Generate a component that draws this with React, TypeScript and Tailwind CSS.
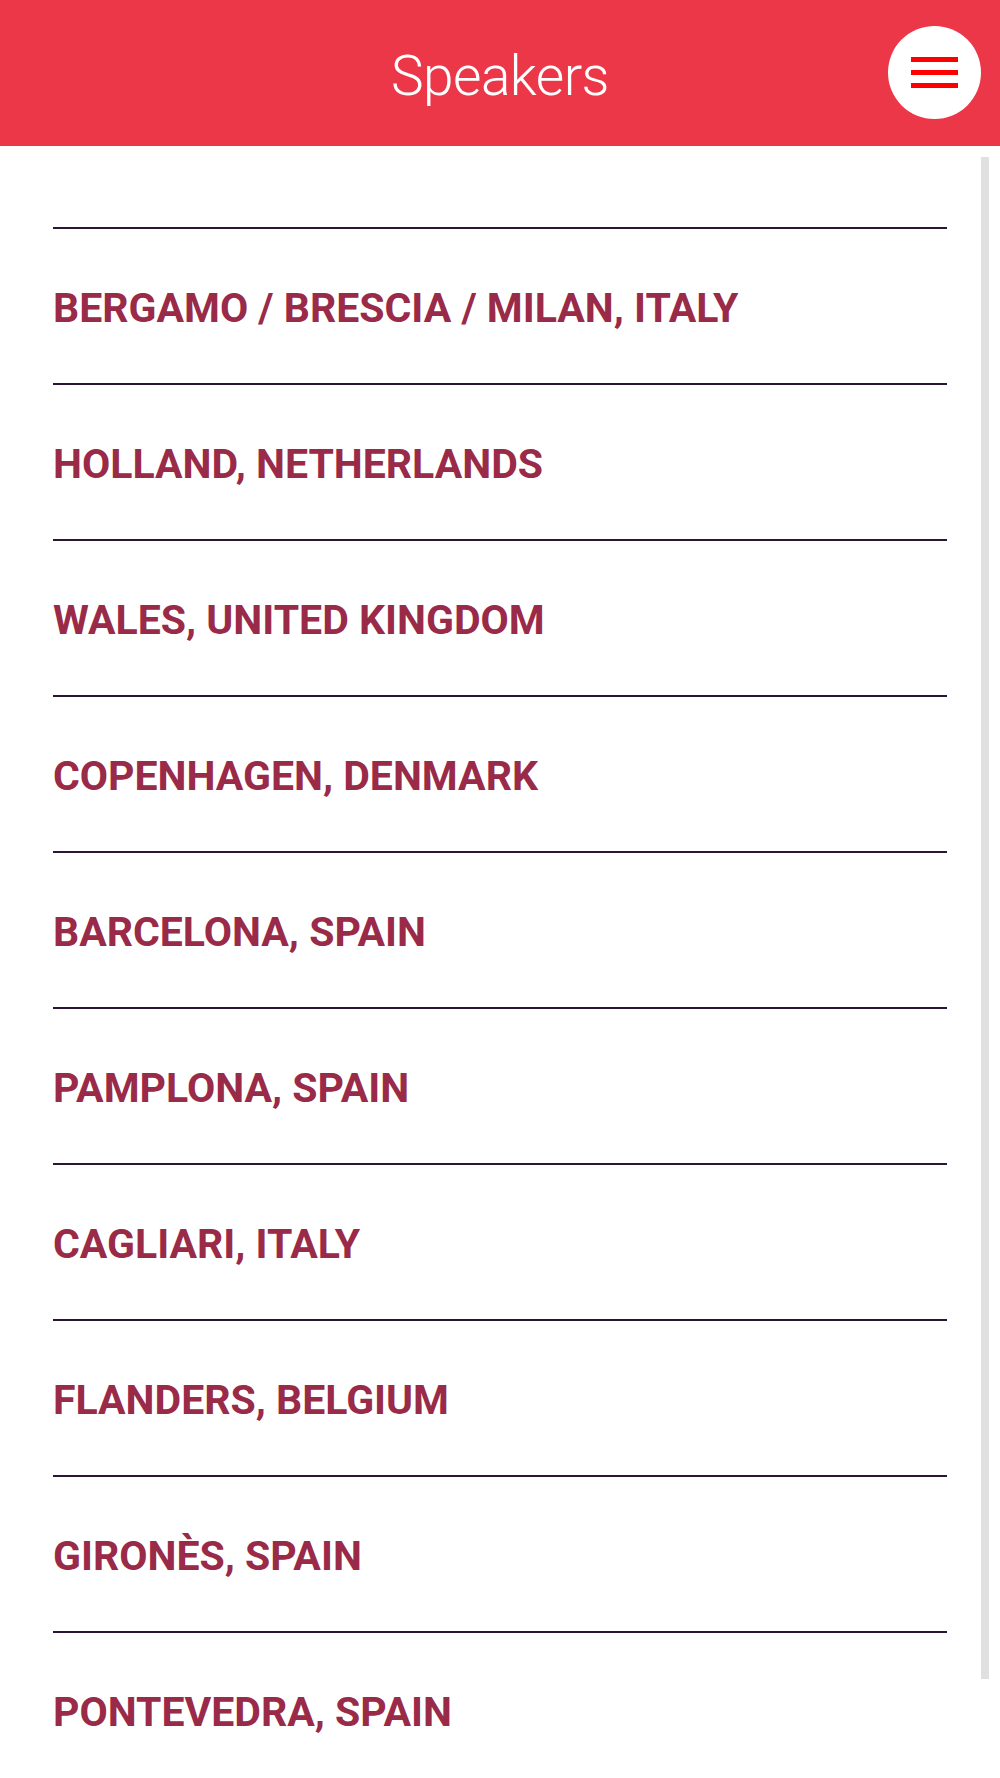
import React from "react";

const places = [
  "BERGAMO / BRESCIA / MILAN, ITALY",
  "HOLLAND, NETHERLANDS",
  "WALES, UNITED KINGDOM",
  "COPENHAGEN, DENMARK",
  "BARCELONA, SPAIN",
  "PAMPLONA, SPAIN",
  "CAGLIARI, ITALY",
  "FLANDERS, BELGIUM",
  "GIRONÈS, SPAIN",
  "PONTEVEDRA, SPAIN",
];

export default function App() {
  return (
    <div className="relative w-[1000px] h-[1778px] overflow-hidden bg-white font-['Roboto',sans-serif]">
      <header className="relative h-[146px] bg-[#eb3748] flex items-center justify-center">
        <h1 className="text-white text-[55px] font-light leading-none tracking-[-0.01em] mt-[6px]">
          Speakers
        </h1>
        <button className="absolute left-[888px] top-[26px] w-[93px] h-[93px] rounded-full bg-white flex flex-col items-center justify-center gap-[8px]">
          <span className="block w-[47px] h-[5px] bg-[#ff0000]" />
          <span className="block w-[47px] h-[5px] bg-[#ff0000]" />
          <span className="block w-[47px] h-[5px] bg-[#ff0000]" />
        </button>
      </header>
      <main className="px-[53px] pt-[81px]">
        <ul>
          {places.map((p) => (
            <li
              key={p}
              className="h-[156px] border-t-2 border-[#2a1535] flex items-center"
            >
              <span className="text-[41px] font-bold text-[#992a48] leading-[48px] pt-[4px]">
                {p}
              </span>
            </li>
          ))}
        </ul>
      </main>
      <div className="absolute left-[981px] top-[157px] w-[8px] h-[1522px] bg-[#e0e0e0]" />
    </div>
  );
}
